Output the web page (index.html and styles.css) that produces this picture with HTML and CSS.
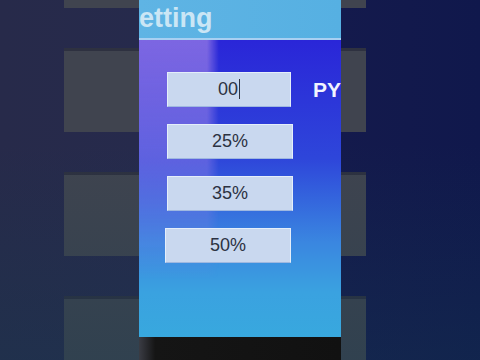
FILE: index.html
```html
<!DOCTYPE html>
<html lang="en">
<head>
    <meta charset="UTF-8">
    <title>Setting</title>
    <link rel="stylesheet" href="styles.css">
</head>
<body>
    <div class="backdrop">
        <div class="ghost"></div>
        <div class="ghost"></div>
        <div class="ghost"></div>
        <div class="ghost"></div>
    </div>

    <div class="screen">
        <div class="title"><span>etting</span></div>
        <div class="rule"></div>
        <div class="panel">
            <div class="row">
                <div class="field">00<span class="caret"></span></div>
                <span class="label">PY</span>
            </div>
            <div class="row"><div class="field">25%</div></div>
            <div class="row"><div class="field">35%</div></div>
            <div class="row shift"><div class="field">50%</div></div>
        </div>
        <div class="bezel"></div>
    </div>
</body>
</html>
```

FILE: styles.css
```css
html, body { margin: 0; height: 100%; }
body { width: 480px; height: 360px; overflow: hidden; position: relative; font-family: "Liberation Sans", Arial, sans-serif;
    background: linear-gradient(to right, #272a4a 0, #262a4c 30%, #141a4c 70%, #10184c 100%); }
body::after { content: ""; position: absolute; inset: 0; background: linear-gradient(to bottom, rgba(0,0,0,0) 40%, rgba(20,60,80,0.35) 100%); pointer-events: none; }

.backdrop { position: absolute; left: 64px; top: -76px; bottom: 0; width: 302px; display: flex; flex-direction: column; gap: 40px; overflow: hidden; }
.ghost { flex: none; height: 84px; background: #40444f; border-top: 3px solid #2e3140; box-sizing: border-box; }

.screen { position: relative; z-index: 2; margin-left: 139px; width: 202px; height: 360px; display: flex; flex-direction: column; overflow: hidden; }
.title { height: 38px; background: linear-gradient(to right, #5fb4e4, #56b0e2); color: #cbe6f5; font-weight: bold; font-size: 27px; line-height: 36px; overflow: hidden; white-space: nowrap; }
.rule { height: 2px; background: #a8d0f2; }
.panel { position: relative; flex: 1; padding-top: 32px; display: flex; flex-direction: column; gap: 17px;
    background: linear-gradient(to bottom, #2a26d8 0, #2e46da 40%, #3a86e0 68%, #3aa2e0 85%, #38a8de 100%); }
.panel::before { content: ""; position: absolute; left: 0; top: 0; width: 80px; height: 240px;
    background: linear-gradient(to bottom, rgba(160,130,230,0.7) 0, rgba(150,130,230,0.5) 45%, rgba(150,140,230,0) 100%);
    -webkit-mask-image: linear-gradient(to right, #000 85%, transparent 100%); mask-image: linear-gradient(to right, #000 85%, transparent 100%); }
.row { position: relative; display: flex; align-items: center; padding-left: 28px; }
.row.shift { padding-left: 26px; }
.field { width: 124px; height: 33px; box-sizing: content-box; background: #c9d8ef; border: 1px solid #e4eefa; border-bottom-color: #9fb8e0;
    color: #2c3242; font-size: 18px; line-height: 33px; text-align: center; }
.caret { display: inline-block; width: 1px; height: 20px; background: #2c3242; vertical-align: -4px; margin-left: 1px; }
.label { margin-left: 22px; color: #f2f4ff; font-weight: bold; font-size: 21px; white-space: nowrap; }
.bezel { height: 23px; background: linear-gradient(to right, #3a3c44 0, #151515 8%, #111 100%); }
```
